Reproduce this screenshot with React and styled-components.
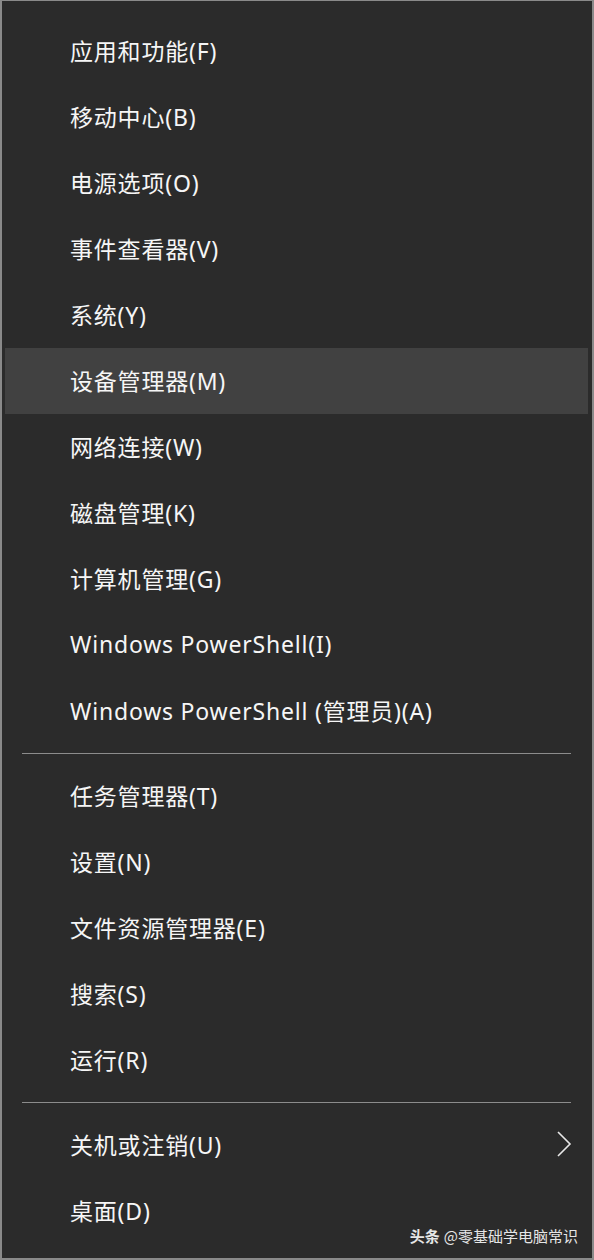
import React from 'react';
import styled, { createGlobalStyle } from 'styled-components';

const GlobalStyle = createGlobalStyle`
  html, body {
    margin: 0;
    padding: 0;
    background: #2b2b2b;
  }
  * {
    box-sizing: border-box;
  }
`;

const Menu = styled.div`
  position: relative;
  width: 594px;
  height: 1260px;
  background: #2b2b2b;
  border: 2px solid #8a8a8a;
  border-top-width: 1px;
  padding: 17px 4px 0 3px;
  display: flex;
  flex-direction: column;
  font-family: "Noto Sans", "Noto Sans CJK SC", sans-serif;
`;

const Item = styled.div`
  height: 66px;
  display: flex;
  align-items: center;
  justify-content: space-between;
  padding: 0 16px 3px 65px;
  color: #f6f6f6;
  font-size: 23px;
  letter-spacing: 0.8px;
  background: ${({ active }) => (active ? '#414141' : 'transparent')};
`;

const Divider = styled.div`
  height: 1px;
  margin: 9px 17px 9px 17px;
  background: #8c8c8c;
`;

const Chevron = styled.svg`
  width: 16px;
  height: 28px;
`;

const Watermark = styled.div`
  position: absolute;
  right: 14px;
  bottom: 12px;
  color: #e6e6e6;
  font-size: 15px;
  font-family: "Noto Sans CJK SC", sans-serif;

  b {
    font-weight: 700;
    margin-right: 4px;
  }
`;

const groups = [
  [
    '应用和功能(F)',
    '移动中心(B)',
    '电源选项(O)',
    '事件查看器(V)',
    '系统(Y)',
    '设备管理器(M)',
    '网络连接(W)',
    '磁盘管理(K)',
    '计算机管理(G)',
    'Windows PowerShell(I)',
    'Windows PowerShell (管理员)(A)',
  ],
  ['任务管理器(T)', '设置(N)', '文件资源管理器(E)', '搜索(S)', '运行(R)'],
  ['关机或注销(U)', '桌面(D)'],
];

const App = () => (
  <>
    <GlobalStyle />
    <Menu>
      {groups.map((group, gi) => (
        <React.Fragment key={gi}>
          {gi > 0 && <Divider />}
          {group.map((label) => (
            <Item key={label} active={label === '设备管理器(M)'}>
              <span>{label}</span>
              {label === '关机或注销(U)' && (
                <Chevron viewBox="0 0 16 28">
                  <path d="M2 2 L14 14 L2 26" fill="none" stroke="#e8e8e8" strokeWidth="1.6" />
                </Chevron>
              )}
            </Item>
          ))}
        </React.Fragment>
      ))}
      <Watermark>
        <b>头条</b>@零基础学电脑常识
      </Watermark>
    </Menu>
  </>
);

export default App;
